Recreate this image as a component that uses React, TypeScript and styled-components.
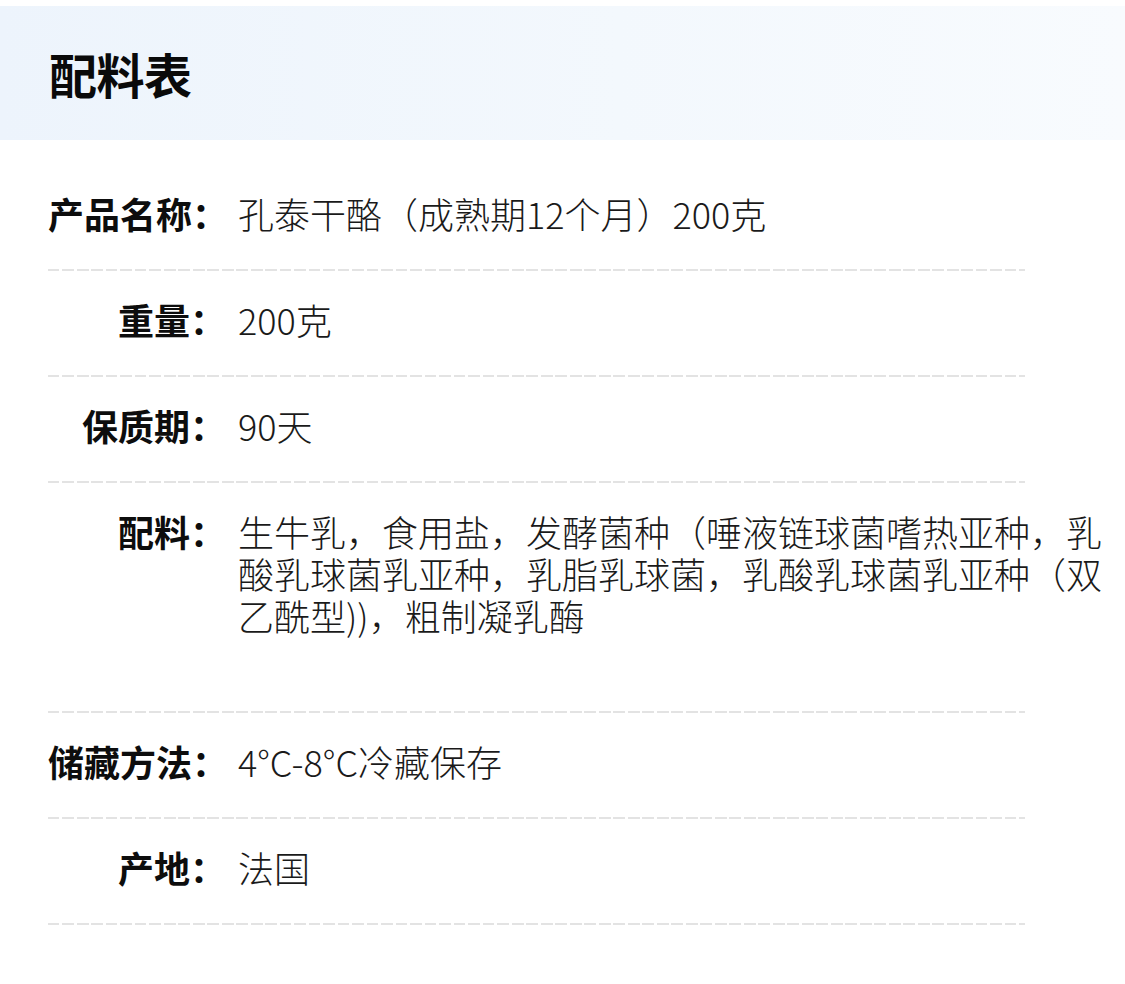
import React from "react";
import styled, { createGlobalStyle } from "styled-components";

const GlobalStyle = createGlobalStyle`
  html, body {
    margin: 0;
    padding: 0;
    background: #ffffff;
  }
  body {
    font-family: "Noto Sans CJK SC", "Noto Sans", sans-serif;
    color: #111;
  }
`;

const Page = styled.div`
  width: 1125px;
  padding-top: 6px;
  box-sizing: border-box;
`;

const Header = styled.header`
  height: 134px;
  display: flex;
  align-items: center;
  padding-left: 49px;
  background: linear-gradient(90deg, #edf4fc 0%, #f3f8fd 55%, #f8fbfe 100%);
`;

const Title = styled.h1`
  margin: 0;
  font-size: 48px;
  font-weight: 700;
  line-height: 1;
  color: #0a0a0a;
  letter-spacing: -0.5px;
`;

const List = styled.dl`
  margin: 0;
  padding: 25px 10px 0 48px;
`;

const Row = styled.div<{ $tail?: number }>`
  display: grid;
  grid-template-columns: 178px 1fr;
  column-gap: 12px;
  padding: 27px 0 ${(p) => 35 + (p.$tail ?? 0)}px;
`;

const Label = styled.dt`
  margin: 0;
  text-align: right;
  font-size: 36px;
  line-height: 42px;
  font-weight: 700;
  color: #0d0d0d;
  white-space: nowrap;
`;

const Value = styled.dd`
  margin: 0;
  font-size: 36px;
  line-height: 42px;
  font-weight: 300;
  color: #1a1a1a;
`;

const Divider = styled.div`
  width: 977px;
  height: 2px;
  background: repeating-linear-gradient(
    90deg,
    #e3e3e3 0px,
    #e3e3e3 11.5px,
    transparent 11.5px,
    transparent 14.5px
  );
`;

type Item = { label: string; value: string; tail?: number };

const items: Item[] = [
  { label: "产品名称：", value: "孔泰干酪（成熟期12个月）200克" },
  { label: "重量：", value: "200克" },
  { label: "保质期：", value: "90天" },
  {
    label: "配料：",
    value:
      "生牛乳，食用盐，发酵菌种（唾液链球菌嗜热亚种，乳酸乳球菌乳亚种，乳脂乳球菌，乳酸乳球菌乳亚种（双乙酰型))，粗制凝乳酶",
    tail: 40,
  },
  { label: "储藏方法：", value: "4°C-8°C冷藏保存" },
  { label: "产地：", value: "法国" },
];

export default function App() {
  return (
    <Page>
      <GlobalStyle />
      <Header>
        <Title>配料表</Title>
      </Header>
      <List>
        {items.map((it) => (
          <React.Fragment key={it.label}>
            <Row $tail={it.tail}>
              <Label>{it.label}</Label>
              <Value>{it.value}</Value>
            </Row>
            <Divider />
          </React.Fragment>
        ))}
      </List>
    </Page>
  );
}
